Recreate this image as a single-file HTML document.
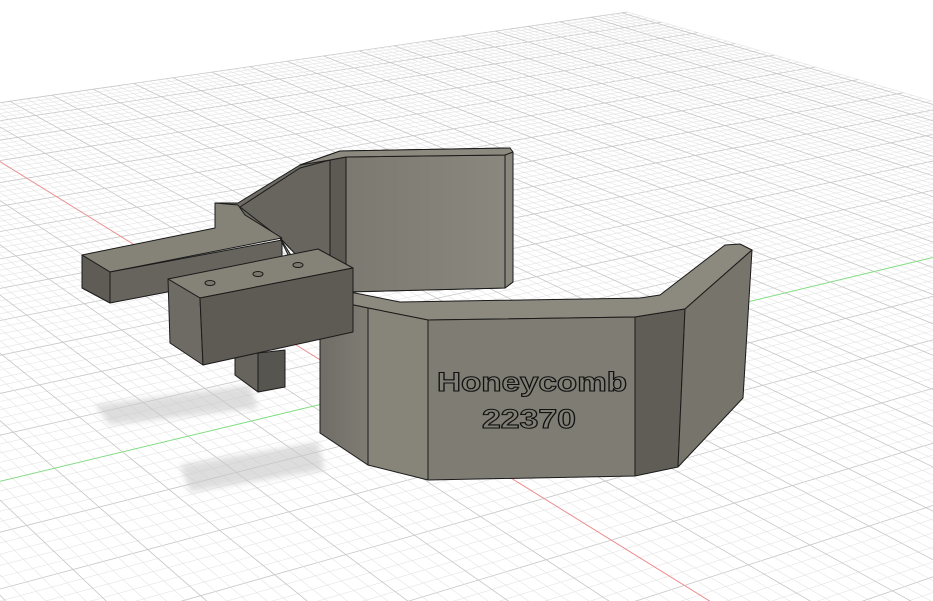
<!DOCTYPE html>
<html><head><meta charset="utf-8">
<style>html,body{margin:0;padding:0;background:#fff;overflow:hidden;width:933px;height:601px}svg{display:block;overflow:hidden}</style>
</head><body>
<svg id="s" width="933" height="601" viewBox="0 0 933 601" xmlns="http://www.w3.org/2000/svg">
<defs>
<filter id="bl"><feGaussianBlur stdDeviation="3"/></filter>
<linearGradient id="g1" x1="0" x2="1"><stop offset="0" stop-color="#7b7970"/><stop offset="1" stop-color="#8a887e"/></linearGradient>
<linearGradient id="g2" x1="0" x2="1"><stop offset="0" stop-color="#6f6d65"/><stop offset="1" stop-color="#7e7c73"/></linearGradient>
</defs>
<g id="grid"></g>
<polygon points="95,405 250,385 258,408 110,425" fill="#c8c8c8" opacity="0.6" filter="url(#bl)"/>
<polygon points="180,465 318,442 325,470 190,492" fill="#c8c8c8" opacity="0.6" filter="url(#bl)"/>
<g stroke="#1a1a1a" stroke-width="1" stroke-linejoin="round">
<polygon points="215,203 238,203 300,165 340,151 510,148 513,155 513,282 505,288 346,292 330,290 280,238 245,215" fill="#6e6c64"/>
<polygon points="240,207 300,168 330,160 330,290 280,238" fill="#67655e"/>
<polygon points="330,160 346,157 346,292 330,290" fill="#5c5a53"/>
<polygon points="346,157 505,155 505,288 346,292" fill="url(#g1)"/>
<polygon points="505,155 513,152 513,282 505,288" fill="#8a877d"/>
<polygon points="300,165 340,151 510,148 513,152 505,155 346,157 330,160" fill="#8c897f"/>
<polygon points="82,255 215,228 215,203 238,205 245,215 282,238 110,272" fill="#858277"/>
<polygon points="82,255 110,272 110,303 82,288" fill="#5e5c55"/>
<polygon points="110,272 282,240 282,270 110,303" fill="#66645d"/>
<polygon points="280,238 310,285 355,293 400,302 640,298 660,295 725,245 740,244 752,250 685,309 635,317 428,320 368,308 320,298 300,280" fill="#8c897e"/>
<polygon points="320,298 368,308 368,465 320,433" fill="url(#g2)"/>
<polygon points="368,308 428,320 428,480 368,465" fill="#878479"/>
<polygon points="428,320 635,317 635,476 428,480" fill="#7e7c73"/>
<polygon points="635,317 685,309 678,467 635,476" fill="#5f5d56"/>
<polygon points="685,309 752,250 743,398 678,467" fill="#76746b"/>
<polygon points="235,355 258,353 258,392 235,375" fill="#66645d"/>
<polygon points="258,353 285,350 285,387 258,392" fill="#57554f"/>
<polygon points="168,279 318,249 353,268 200,298" fill="#858277"/>
<polygon points="168,279 200,298 203,365 170,343" fill="#6d6b63"/>
<polygon points="200,298 353,268 353,332 203,365" fill="#5d5b54"/>
<ellipse cx="210" cy="283" rx="5" ry="2.5" fill="#7a776d"/>
<ellipse cx="258" cy="274" rx="5" ry="2.5" fill="#7a776d"/>
<ellipse cx="298" cy="265" rx="5" ry="2.5" fill="#7a776d"/>
</g>
<g font-family="Liberation Sans, sans-serif" font-weight="bold" fill="#807e75" stroke="#111" stroke-width="1.1" text-anchor="middle">
<text x="532" y="391" font-size="27" textLength="190" lengthAdjust="spacingAndGlyphs">Honeycomb</text>
<text x="529" y="428" font-size="27" textLength="94" lengthAdjust="spacingAndGlyphs">22370</text>
</g>
</svg>
<script>
(function(){
var O=[372,392],VR=[-1020,-470],VG=[3969,-471];
var k1=12/1637,k2=12/3699;
// H columns: c1=k1*(VR,1), c2=k2*(VG,1), c3=(O,1)
var H=[[k1*VR[0],k2*VG[0],O[0]],[k1*VR[1],k2*VG[1],O[1]],[k1,k2,1]];
function P(u,v){var w=H[2][0]*u+H[2][1]*v+1;return [(H[0][0]*u+H[0][1]*v+H[0][2])/w,(H[1][0]*u+H[1][1]*v+H[1][2])/w];}
function inv(X,Y){// solve H*(u,v,1)*s = (X,Y,1)
var a=H[0][0]-X*H[2][0],b=H[0][1]-X*H[2][1],c=X-H[0][2];
var d=H[1][0]-Y*H[2][0],e=H[1][1]-Y*H[2][1],f=Y-H[1][2];
var det=a*e-b*d;return [(c*e-b*f)/det,(a*f-c*d)/det];}
var far=inv(625,10);var Um=Math.floor(far[0]),Vm=Math.floor(far[1]);
var g=document.getElementById('grid'),out='';
function ln(a,c,col,w){out+='<line x1="'+a[0].toFixed(1)+'" y1="'+a[1].toFixed(1)+'" x2="'+c[0].toFixed(1)+'" y2="'+c[1].toFixed(1)+'" stroke="'+col+'" stroke-width="'+w+'"/>';}
var minW=0.03,LO=-3000;
for(var u=LO;u<=Um;u++){var vlo=Math.max(LO,(minW-1-k1*u)/k2);if(vlo>=Vm)continue;var maj=(u%5==0);ln(P(u,vlo),P(u,Vm),maj?'#c6c6c6':'#e4e4e4',maj?0.8:0.6);}
for(var v=LO;v<=Vm;v++){var ulo=Math.max(LO,(minW-1-k2*v)/k1);if(ulo>=Um)continue;var maj=(v%5==0);ln(P(ulo,v),P(Um,v),maj?'#c6c6c6':'#e4e4e4',maj?0.8:0.6);}
ln(P((minW-1)/k1,0),P(Um,0),'#f08a8a',0.9);
ln(P(0,(minW-1)/k2),P(0,Vm),'#80e080',0.9);
g.innerHTML=out;
})();
</script>
</body></html>
